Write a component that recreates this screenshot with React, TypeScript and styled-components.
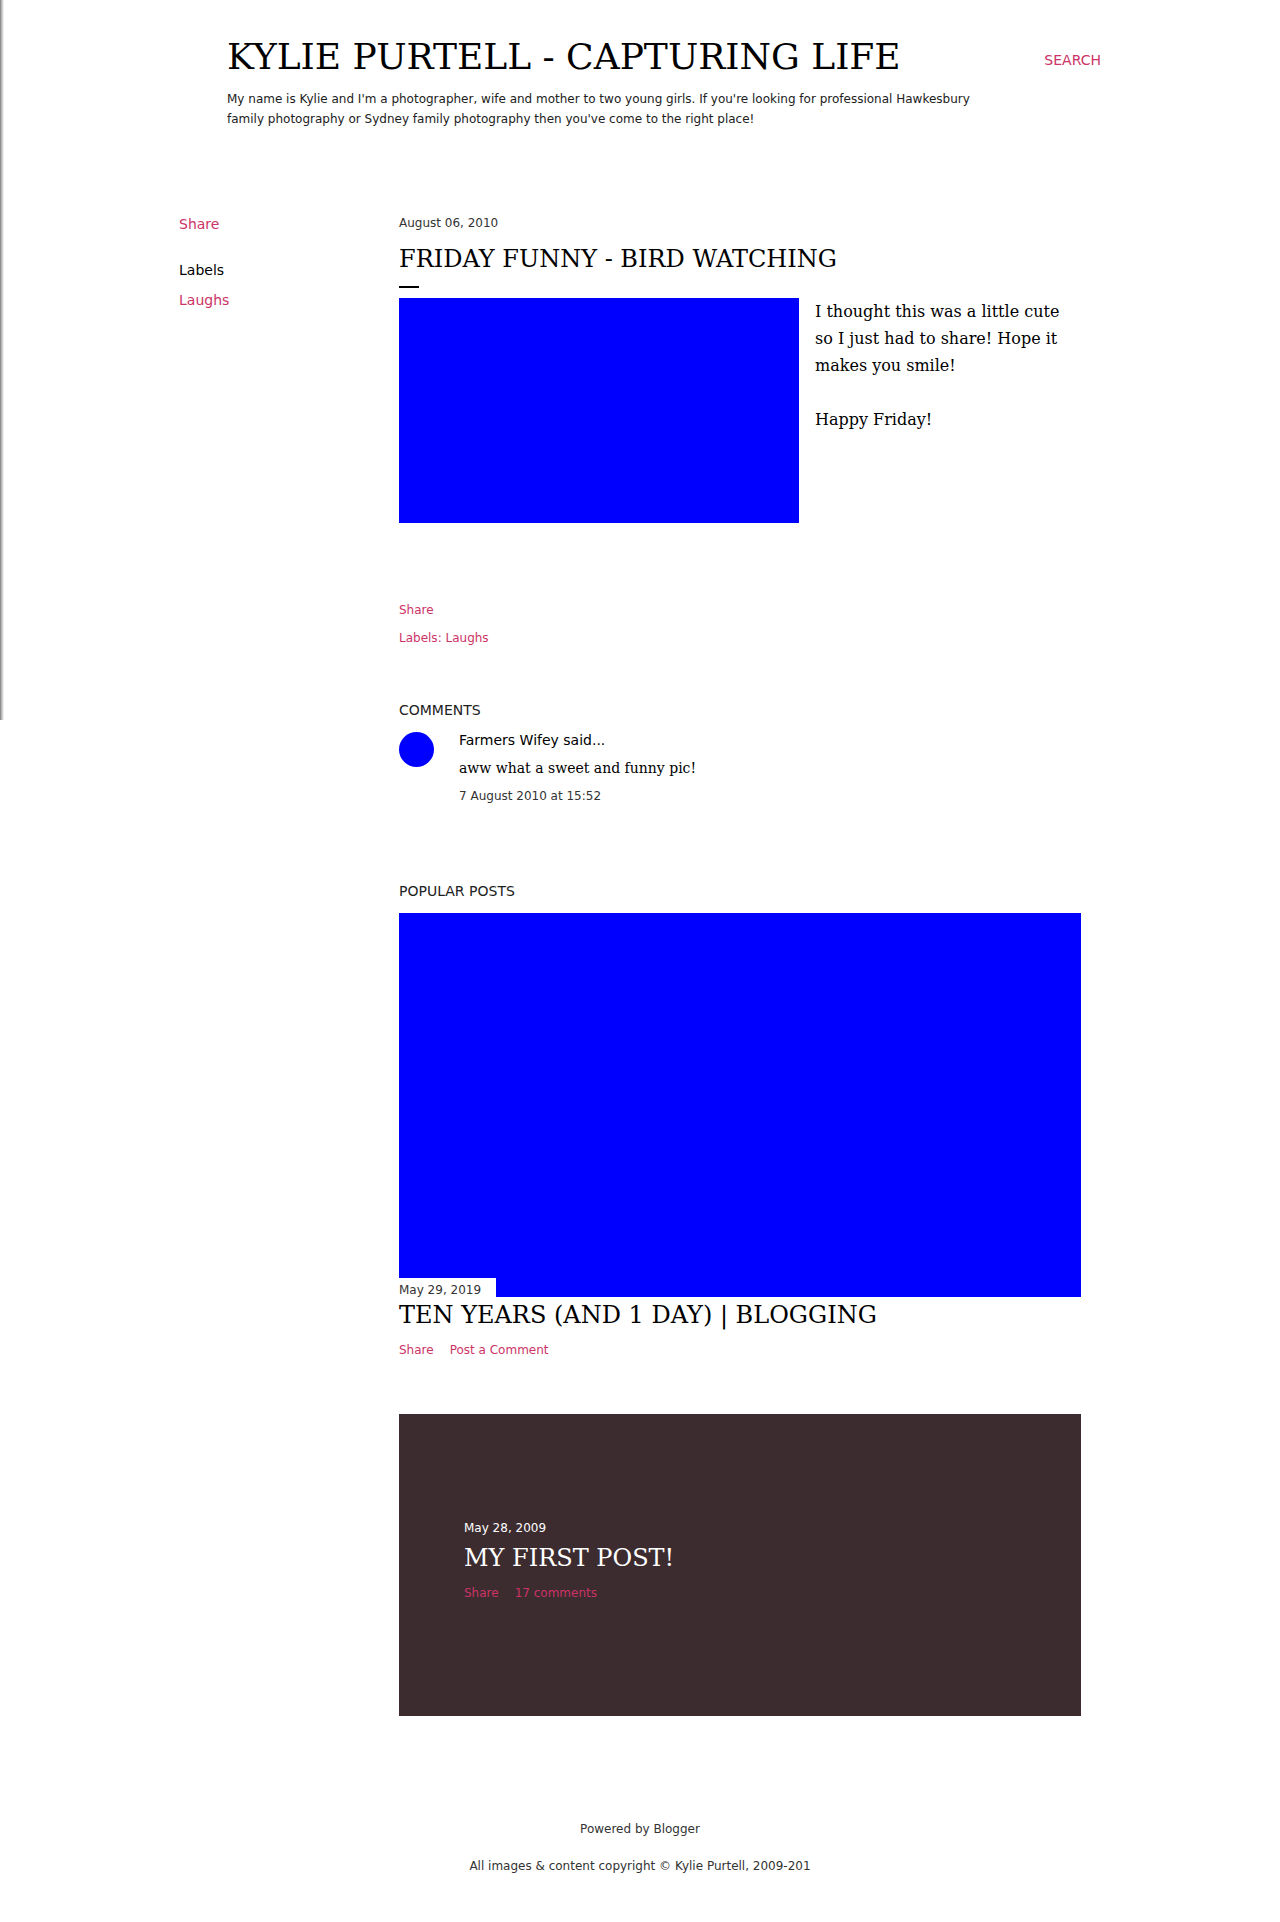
import React from "react";
import styled, { createGlobalStyle } from "styled-components";

const SANS = `"DejaVu Sans", "Liberation Sans", sans-serif`;
const SERIF = `"DejaVu Serif", "Liberation Serif", serif`;
const LINK = "#cc3366";
const TEXT = "#212121";

const Global = createGlobalStyle`
  html, body { margin: 0; padding: 0; background: #fff; }
  body { font-family: ${SANS}; color: ${TEXT}; }
  a { text-decoration: none; }
`;

const Page = styled.div`
  position: relative;
  min-height: 1922px;
`;

const EdgeShadow = styled.div`
  position: absolute;
  left: 0;
  top: 0;
  width: 4px;
  height: 720px;
  background: linear-gradient(to right, #7d7d7d, #c4c4c4 50%, #fff);
`;

const Header = styled.header`
  display: flex;
  align-items: flex-start;
  justify-content: space-between;
  padding: 35px 0 0 227px;
  width: 874px;
`;

const Brand = styled.div`
  display: flex;
  flex-direction: column;
  gap: 11px;
`;

const SiteTitle = styled.h1`
  margin: 0;
  font-family: ${SERIF};
  font-weight: 400;
  font-size: 36px;
  line-height: 1.2;
  color: #000;
`;

const Description = styled.p`
  margin: 0;
  max-width: 760px;
  font-size: 12px;
  line-height: 20px;
  color: ${TEXT};
`;

const SearchLink = styled.a`
  margin-top: 16px;
  font-size: 14px;
  line-height: 18px;
  color: ${LINK};
`;

const Body = styled.div`
  display: flex;
  padding: 86px 0 0 179px;
`;

const Sidebar = styled.aside`
  width: 220px;
  flex: none;
  display: flex;
  flex-direction: column;
  margin-top: -1px;
`;

const SideLink = styled.a<{ $gap?: number }>`
  display: block;
  font-size: 14px;
  line-height: 20px;
  color: ${LINK};
  margin-top: ${(p) => p.$gap ?? 0}px;
`;

const SideHeading = styled.div`
  font-size: 14px;
  line-height: 20px;
  color: #000;
  margin-top: 26px;
`;

const Main = styled.main`
  width: 682px;
  flex: none;
`;

const DateLine = styled.div<{ $light?: boolean }>`
  font-size: 12px;
  line-height: 16px;
  color: ${(p) => (p.$light ? "#fff" : "#333")};
`;

const PostTitle = styled.h2<{ $light?: boolean; $gap?: number }>`
  margin: ${(p) => p.$gap ?? 14}px 0 0;
  font-family: ${SERIF};
  font-weight: 400;
  font-size: 24px;
  line-height: 1.2;
  color: ${(p) => (p.$light ? "#fff" : "#000")};
`;

const Dash = styled.div`
  width: 20px;
  height: 2px;
  background: #000;
  margin: 12px 0 10px;
`;

const PostBody = styled.div`
  font-family: ${SERIF};
  font-size: 16px;
  line-height: 27px;
  color: #000;
  &::after {
    content: "";
    display: block;
    clear: both;
  }
`;

const FloatImage = styled.div`
  float: left;
  width: 400px;
  height: 225px;
  background: #0000ff;
  margin-right: 16px;
`;

const Footer = styled.div<{ $gap: number }>`
  margin-top: ${(p) => p.$gap}px;
  display: flex;
  flex-direction: column;
  gap: 12px;
`;

const LinkRow = styled.div<{ $gap?: number }>`
  display: flex;
  gap: 16px;
  margin-top: ${(p) => p.$gap ?? 0}px;
`;

const SmallLink = styled.a`
  font-size: 12px;
  line-height: 16px;
  color: ${LINK};
`;

const SectionTitle = styled.h3<{ $gap: number }>`
  margin: ${(p) => p.$gap}px 0 0;
  font-size: 14px;
  font-weight: 400;
  line-height: 20px;
  color: ${TEXT};
`;

const Comment = styled.div`
  display: flex;
  gap: 25px;
  margin-top: 10px;
`;

const Avatar = styled.div`
  width: 35px;
  height: 35px;
  border-radius: 50%;
  background: #0000ff;
  flex: none;
  margin-top: 2px;
`;

const CommentMain = styled.div`
  display: flex;
  flex-direction: column;
`;

const Author = styled.div`
  font-size: 14px;
  line-height: 20px;
  color: #000;
`;

const CommentText = styled.div`
  font-family: ${SERIF};
  font-size: 14px;
  line-height: 20px;
  color: #000;
  margin-top: 8px;
`;

const CommentDate = styled.div`
  font-size: 12px;
  line-height: 16px;
  color: #333;
  margin-top: 10px;
`;

const PopularImage = styled.div`
  width: 682px;
  height: 384px;
  margin-top: 12px;
  background: #0000ff;
`;

const DateTag = styled.div`
  position: relative;
  width: fit-content;
  margin-top: -19px;
  padding: 4px 15px 0 0;
  background: #fff;
`;

const DarkCard = styled.div`
  margin-top: 56px;
  background: #3c2c2f;
  padding: 106px 65px 115px;
`;

const PageFooter = styled.footer`
  display: flex;
  flex-direction: column;
  align-items: center;
  gap: 21px;
  margin-top: 105px;
  font-size: 12px;
  line-height: 16px;
  color: #333;
`;

export default function App() {
  return (
    <Page>
      <Global />
      <EdgeShadow />
      <Header>
        <Brand>
          <SiteTitle>KYLIE PURTELL - CAPTURING LIFE</SiteTitle>
          <Description>
            My name is Kylie and I'm a photographer, wife and mother to two young girls. If you're looking for
            professional Hawkesbury family photography or Sydney family photography then you've come to the right
            place!
          </Description>
        </Brand>
        <SearchLink>SEARCH</SearchLink>
      </Header>

      <Body>
        <Sidebar>
          <SideLink>Share</SideLink>
          <SideHeading>Labels</SideHeading>
          <SideLink $gap={10}>Laughs</SideLink>
        </Sidebar>

        <Main>
          <DateLine>August 06, 2010</DateLine>
          <PostTitle>FRIDAY FUNNY - BIRD WATCHING</PostTitle>
          <Dash />
          <PostBody>
            <FloatImage />
            I thought this was a little cute so I just had to share! Hope it makes you smile!
            <br />
            <br />
            Happy Friday!
          </PostBody>

          <Footer $gap={79}>
            <SmallLink>Share</SmallLink>
            <SmallLink>Labels: Laughs</SmallLink>
          </Footer>

          <SectionTitle $gap={54}>COMMENTS</SectionTitle>
          <Comment>
            <Avatar />
            <CommentMain>
              <Author>Farmers Wifey said...</Author>
              <CommentText>aww what a sweet and funny pic!</CommentText>
              <CommentDate>7 August 2010 at 15:52</CommentDate>
            </CommentMain>
          </Comment>

          <SectionTitle $gap={77}>POPULAR POSTS</SectionTitle>
          <PopularImage />
          <DateTag>
            <DateLine>May 29, 2019</DateLine>
          </DateTag>
          <PostTitle $gap={3}>TEN YEARS (AND 1 DAY) | BLOGGING</PostTitle>
          <LinkRow $gap={12}>
            <SmallLink>Share</SmallLink>
            <SmallLink>Post a Comment</SmallLink>
          </LinkRow>

          <DarkCard>
            <DateLine $light>May 28, 2009</DateLine>
            <PostTitle $light $gap={8}>MY FIRST POST!</PostTitle>
            <LinkRow $gap={12}>
              <SmallLink>Share</SmallLink>
              <SmallLink>17 comments</SmallLink>
            </LinkRow>
          </DarkCard>
        </Main>
      </Body>

      <PageFooter>
        <div>Powered by Blogger</div>
        <div>All images &amp; content copyright © Kylie Purtell, 2009-201</div>
      </PageFooter>
    </Page>
  );
}
